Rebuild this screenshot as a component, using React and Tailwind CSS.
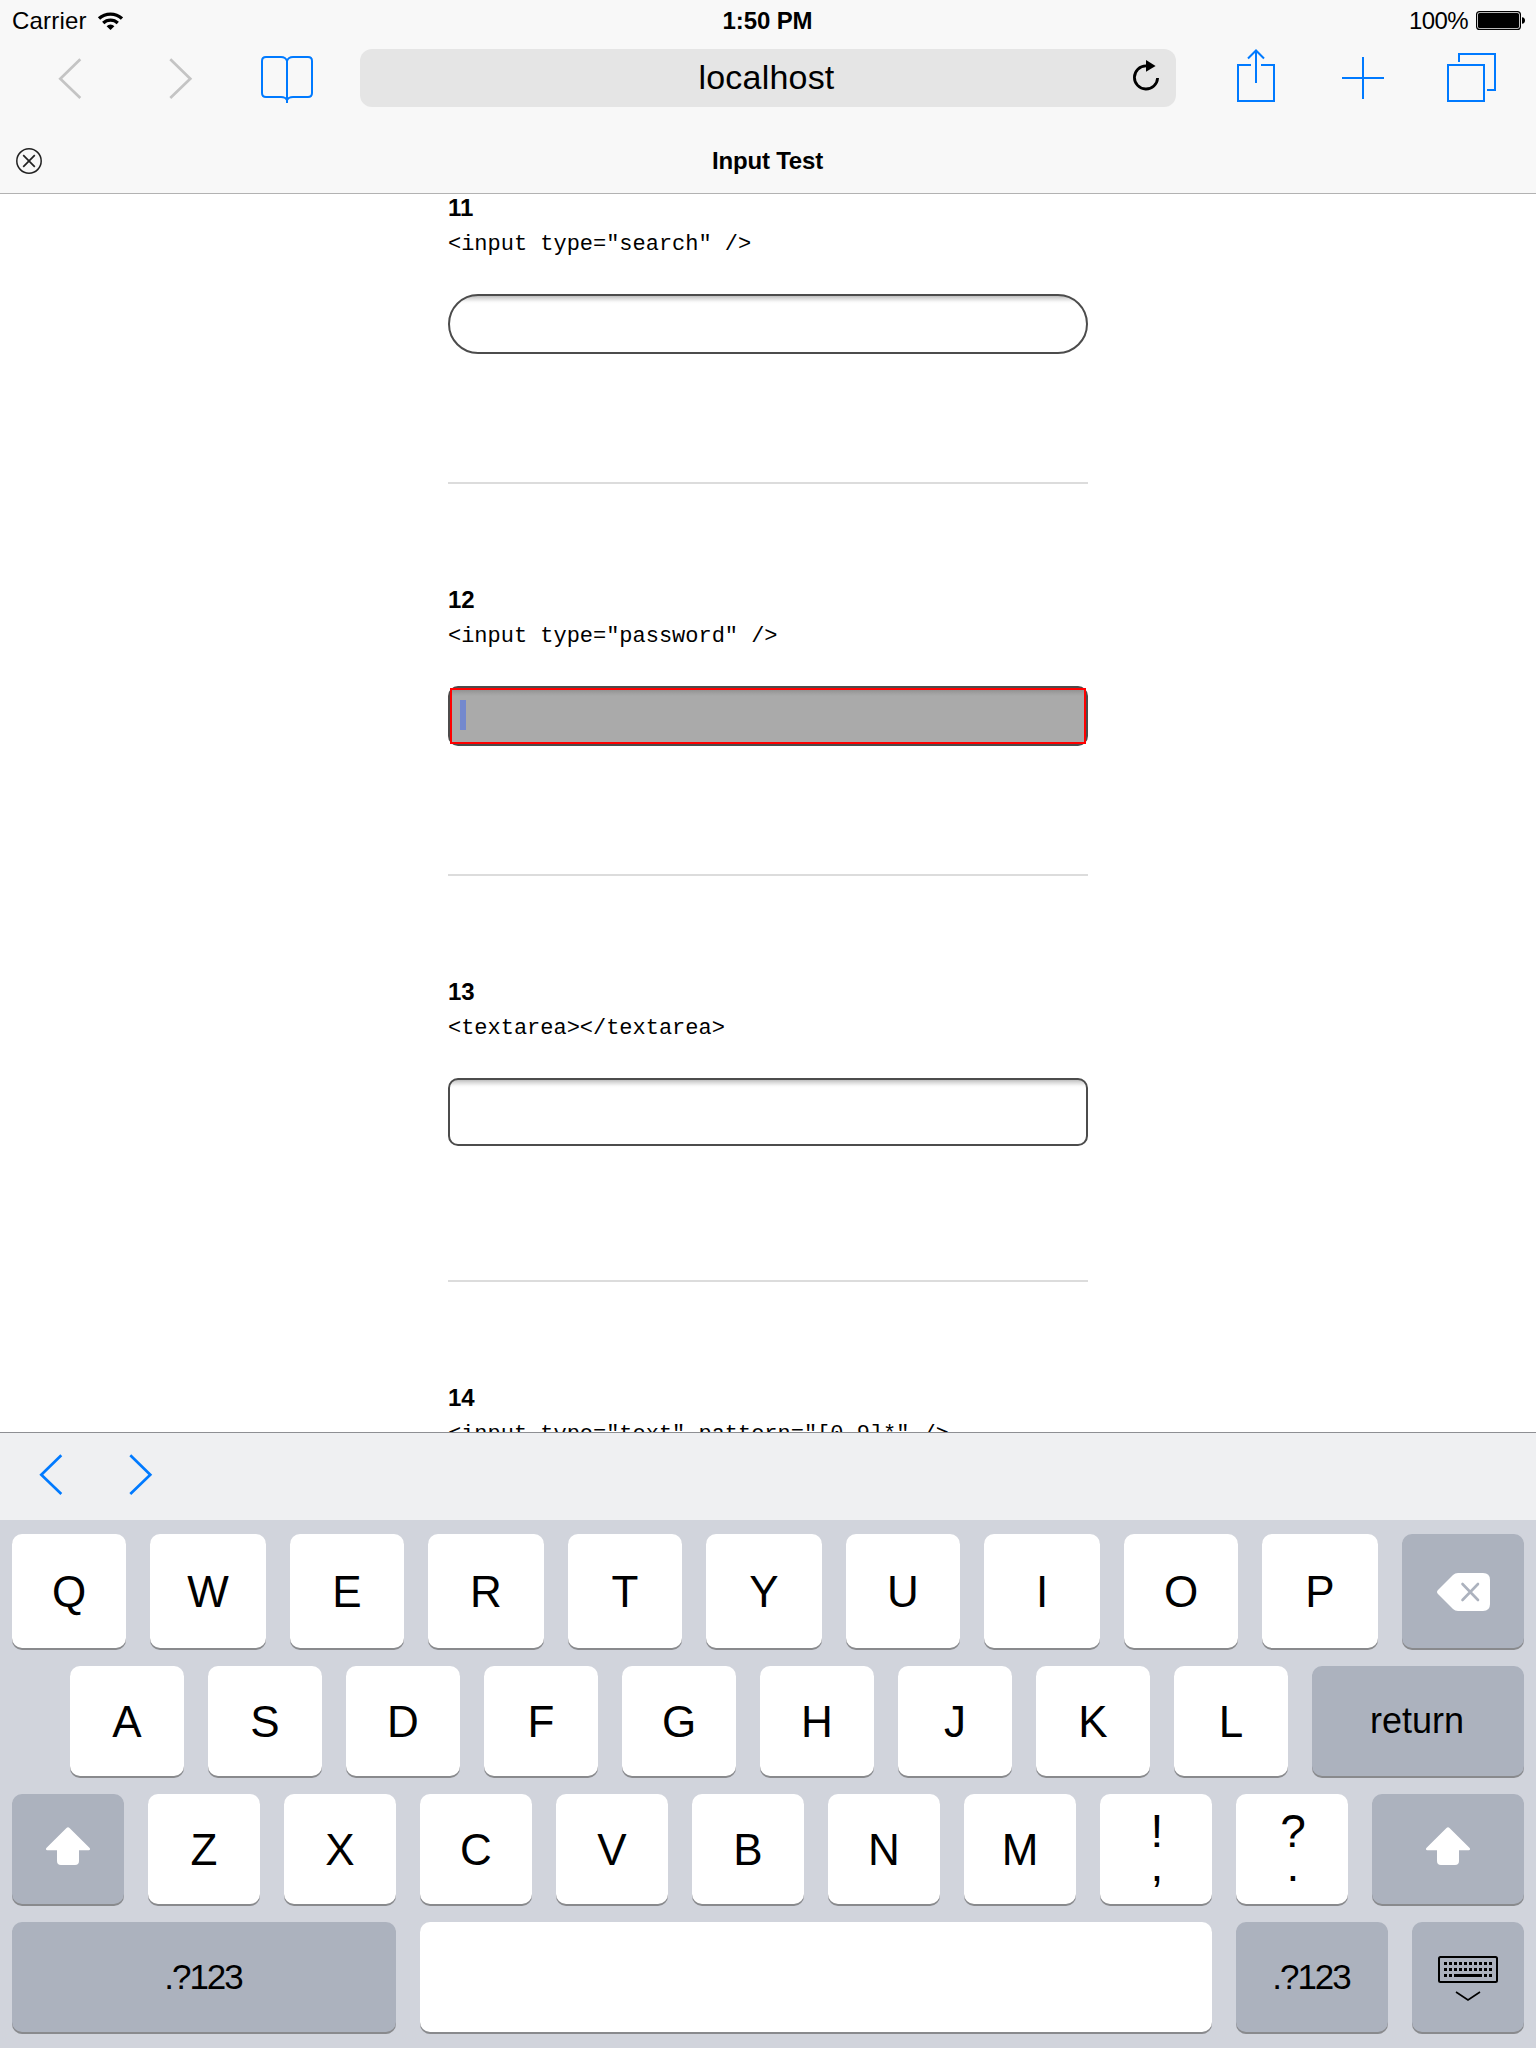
import React from "react";

const FIELD_SHADE =
  "bg-[linear-gradient(to_bottom,rgba(0,0,0,0.25)_0px,rgba(0,0,0,0.12)_3px,rgba(0,0,0,0.02)_6px,rgba(0,0,0,0)_8px)]";

function StatusBar() {
  return (
    <div className="flex h-10 items-center pt-[2px] text-2xl leading-7">
      <div className="flex flex-1 items-center pl-3">
        <span className="w-[76px] tracking-[0.2px]">Carrier</span>
        <svg className="ml-[9px]" width="26" height="20" viewBox="97 10 26 20" fill="none" stroke="#000">
          <path d="M99 17.6a17 17 0 0 1 23 0" strokeWidth="3.4" />
          <path d="M103.2 22a10.6 10.6 0 0 1 14.6 0" strokeWidth="3.2" />
          <path d="M106.6 25.2a5.6 5.6 0 0 1 7.8 0L110.5 29Z" fill="#000" stroke="none" />
        </svg>
      </div>
      <span className="pr-[3px] font-bold tracking-[-0.1px]">1:50 PM</span>
      <div className="flex flex-1 items-center justify-end pr-[10px]">
        <span className="tracking-[-0.6px]">100%</span>
        <svg className="ml-[8px]" width="50" height="20" viewBox="1476 11 50 20">
          <rect x="1476.6" y="11.6" width="43.8" height="17.8" rx="3" fill="none" stroke="#000" strokeWidth="1.2" />
          <rect x="1478" y="13" width="41" height="15" rx="1.6" />
          <path d="M1522 17.2c2 0 3 1.4 3 3.3s-1 3.3-3 3.3Z" />
        </svg>
      </div>
    </div>
  );
}

function Toolbar() {
  return (
    <div className="flex h-[76px] items-center pl-10">
      <svg width="60" height="60" viewBox="40 48 60 60" fill="none" stroke="#c4c4c4" strokeWidth="2.7">
        <path d="M80.3 59.3 60.3 78.7 80.3 98" />
      </svg>
      <svg className="ml-[50px]" width="60" height="60" viewBox="150 48 60 60" fill="none" stroke="#c4c4c4" strokeWidth="2.7">
        <path d="M170.3 59.3 190.3 78.7 170.3 98" />
      </svg>
      <svg className="ml-[47px]" width="60" height="60" viewBox="257 48 60 60" fill="none" stroke="#007aff" strokeWidth="2">
        <path d="M287 61c-1-3-3-4-6-4h-15q-4 0-4 4v32q0 4 4 4h15c3 0 5 1 6 3 1-2 3-3 6-3h15q4 0 4-4V61q0-4-4-4h-15c-3 0-5 1-6 4Z" />
        <path d="M287 59v44" />
      </svg>
      <div className="ml-[43px] flex h-[58px] w-[816px] items-center rounded-xl bg-[#e5e5e5]">
        <span className="flex-1 pb-[2px] pl-[51px] text-center text-[34px] leading-10 tracking-[0.2px]">localhost</span>
        <svg className="mr-[14px]" width="40" height="40" viewBox="1122 60 40 40">
          <path d="M1157.6 80a11.6 11.6 0 1 1-11.6-12.2" fill="none" stroke="#000" strokeWidth="2.8" />
          <path d="M1146 62v11.8l9.6-5.9Z" />
        </svg>
      </div>
      <svg className="ml-[50px]" width="60" height="60" viewBox="1226 48 60 60" fill="none" stroke="#007aff" strokeWidth="2">
        <path d="M1251 65h-13v36h36V65h-13M1256 83V51" />
        <path d="m1248 58.5 8-8 8 8" />
      </svg>
      <svg className="ml-[47px]" width="60" height="60" viewBox="1333 48 60 60" fill="none" stroke="#007aff" strokeWidth="2">
        <path d="M1342 78h42M1363 57v42" />
      </svg>
      <svg className="ml-12" width="60" height="60" viewBox="1441 48 60 60" fill="none" stroke="#007aff" strokeWidth="2">
        <path d="M1448 65h36v36h-36ZM1459 62v-8h36v36h-8" />
      </svg>
    </div>
  );
}

function TabBar() {
  return (
    <div className="flex h-[77px] items-center px-4 pt-[13px]">
      <svg width="26" height="26" viewBox="0 0 26 26" fill="none" stroke="#222">
        <circle cx="13" cy="13" r="12.2" strokeWidth="1.5" />
        <path d="M7.2 7.2 18.8 18.8M18.8 7.2 7.2 18.8" strokeWidth="1.7" />
      </svg>
      <span className="flex-1 text-center text-2xl leading-7 font-bold tracking-[-0.2px]">Input Test</span>
      <span className="w-[27px]" />
    </div>
  );
}

function Field({ n, code, children }) {
  return (
    <section>
      <h2 className="h-7 text-2xl leading-7 font-bold">{n}</h2>
      <p className="mt-[9px] h-7 font-['Liberation_Mono',monospace] text-[22px] leading-7 tracking-[-0.02px] whitespace-pre">
        {code}
      </p>
      <div className="mt-[35px]">{children}</div>
    </section>
  );
}

function Rule({ className }) {
  return <div className={"mb-[102px] h-[2px] bg-[#dcdcdc] " + className} />;
}

function Key({ className = "", dark, children }) {
  return (
    <div
      className={
        "flex items-center justify-center rounded-[10px] shadow-[0_2px_0_#898a8d] " +
        (dark ? "bg-[#acb2be] " : "bg-white pt-[2px] text-[44px] leading-[50px] ") +
        className
      }
    >
      {children}
    </div>
  );
}

function Shift() {
  return (
    <svg width="44" height="38" viewBox="0 0 44 38" className="mb-[6px]">
      <path
        d="M22 0.2q.8 0 1.5.8L43.4 20.8q.8 1 .6 1.6-.3.8-1.3.8H33V34q0 4-4 4H15q-4 0-4-4V23.2H1.3Q.3 23.2 0 22.4q-.2-.6.6-1.6L20.5 1q.7-.8 1.5-.8Z"
        fill="#fff"
      />
    </svg>
  );
}

function StackedKey({ top, bottom }) {
  return (
    <div className="flex h-[110px] w-[112px] flex-col items-center rounded-[10px] bg-white pt-[21px] pl-[2px] text-[46px] leading-8 shadow-[0_2px_0_#898a8d]">
      <span>{top}</span>
      <span className="mt-[2px]">{bottom}</span>
    </div>
  );
}

const DOTS = [0, 1, 2, 3, 4, 5, 6, 7, 8, 9];

function Keyboard() {
  return (
    <div className="flex h-[528px] flex-col bg-[#d1d4dc] px-3 pt-[14px]">
      <div className="flex h-[114px] gap-6">
        {"QWERTYUIOP".split("").map((c, i) => (
          <Key key={c} className={i % 2 ? "w-[116px] shrink-0" : "w-[114px] shrink-0"}>
            {c}
          </Key>
        ))}
        <Key dark className="flex-1">
          <svg width="54" height="38" viewBox="0 0 54 38" className="mt-[2px] ml-[1px]">
            <path d="M21 0h25q7 0 7 7v24q0 7-7 7H21q-3 0-5-2L1 21q-2-2 0-4L16 2q2-2 5-2Z" fill="#fff" />
            <path d="m25.5 11 15.5 16M41 11 25.5 27" stroke="#acb2be" strokeWidth="2.6" strokeLinecap="round" />
          </svg>
        </Key>
      </div>
      <div className="mt-[18px] flex h-[110px] gap-6 pl-[58px]">
        {"ASDFGHJKL".split("").map((c) => (
          <Key key={c} className="w-[114px] shrink-0">
            {c}
          </Key>
        ))}
        <Key dark className="flex-1 pr-[2px] text-4xl">
          return
        </Key>
      </div>
      <div className="mt-[18px] flex h-[110px] gap-6">
        <Key dark className="w-[112px]">
          <Shift />
        </Key>
        {"ZXCVBNM".split("").map((c) => (
          <Key key={c} className="w-[112px] shrink-0">
            {c}
          </Key>
        ))}
        <StackedKey top="!" bottom="," />
        <StackedKey top="?" bottom="." />
        <Key dark className="flex-1">
          <Shift />
        </Key>
      </div>
      <div className="mt-[18px] flex h-[110px] gap-6">
        <Key dark className="w-[384px] pr-[2px] text-[35px] tracking-[-2px]">
          .?123
        </Key>
        <Key className="w-[792px]" />
        <Key dark className="w-[152px] pr-[2px] text-[35px] tracking-[-2px]">
          .?123
        </Key>
        <Key dark className="w-[112px]">
          <svg width="60" height="46" viewBox="0 0 60 46" className="mt-[4px]">
            <rect x="1" y="1" width="58" height="25" rx="1.5" fill="none" stroke="#000" strokeWidth="2" />
            {DOTS.map((i) => (
              <g key={i}>
                <rect x={6 + i * 5} y="6" width="3" height="3" />
                <rect x={6 + i * 5} y="12" width="3" height="3" />
              </g>
            ))}
            <path d="M6 18h3v3H6ZM11 18h3v3h-3ZM16 18h28v3H16ZM46 18h3v3h-3ZM51 18h3v3h-3Z" />
            <path d="m18 36 12 8 12-8" fill="none" stroke="#000" strokeWidth="1.6" />
          </svg>
        </Key>
      </div>
    </div>
  );
}

export default function App() {
  return (
    <div className="flex h-[2048px] w-[1536px] flex-col overflow-hidden bg-white font-['Liberation_Sans',Arial,sans-serif] text-black">
      <header className="h-[194px] shrink-0 border-b border-[#b2b2b2] bg-[#f8f8f8]">
        <StatusBar />
        <Toolbar />
        <TabBar />
      </header>

      <main className="mx-auto h-[1238px] w-[640px] shrink-0 overflow-hidden">
        <Field n="11" code={'<input type="search" />'}>
          <div className={"h-[60px] rounded-full border-2 border-[#4c4c4c] " + FIELD_SHADE} />
        </Field>
        <Rule className="mt-32" />
        <Field n="12" code={'<input type="password" />'}>
          <div className="h-[60px] rounded-[10px] border-2 border-[#4c4c4c] bg-[#aaaaaa]">
            <div className="h-[56px] border-2 border-[#ff0000] bg-[linear-gradient(to_bottom,#929292_0px,#a0a0a0_3px,#aaaaaa_6px)] pt-[10px] pl-2">
              <div className="h-[30px] w-[6px] bg-[#7489ce]" />
            </div>
          </div>
        </Field>
        <Rule className="mt-32" />
        <Field n="13" code="<textarea></textarea>">
          <div className={"h-[68px] rounded-[10px] border-2 border-[#4c4c4c] " + FIELD_SHADE} />
        </Field>
        <Rule className="mt-[134px]" />
        <Field n="14" code={'<input type="text" pattern="[0-9]*" />'} />
      </main>

      <div className="flex h-[88px] shrink-0 items-center border-t border-[#8e8f93] bg-[#eff0f2] pb-[3px] pl-[38px]">
        <svg width="26" height="44" viewBox="38 1453 26 44" fill="none" stroke="#007aff" strokeWidth="2.7">
          <path d="M61.3 1455.3 41.3 1474.7 61.3 1494" />
        </svg>
        <svg className="ml-[63px]" width="26" height="44" viewBox="127 1453 26 44" fill="none" stroke="#007aff" strokeWidth="2.7">
          <path d="M130.3 1455.3 150.3 1474.7 130.3 1494" />
        </svg>
      </div>

      <Keyboard />
    </div>
  );
}
